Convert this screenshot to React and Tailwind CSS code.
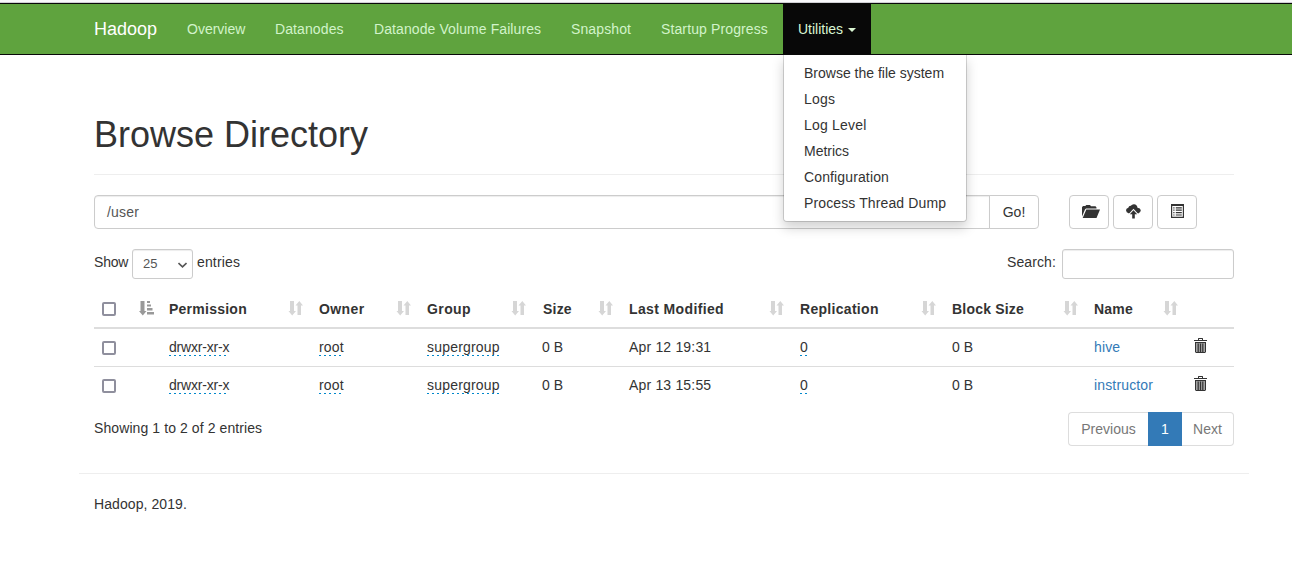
import React from "react";

const NAV = [
  { label: "Overview", cls: "w-[88px]" },
  { label: "Datanodes", cls: "w-[99px] tracking-[0.1px]" },
  { label: "Datanode Volume Failures", cls: "w-[197px] tracking-[0.09px]" },
  { label: "Snapshot", cls: "w-[90px] tracking-[0.12px]" },
  { label: "Startup Progress", cls: "w-[137px] tracking-[0.12px]" },
];

const MENU = [
  { label: "Browse the file system", cls: "" },
  { label: "Logs", cls: "tracking-[0.2px]" },
  { label: "Log Level", cls: "tracking-[0.2px]" },
  { label: "Metrics", cls: "" },
  { label: "Configuration", cls: "tracking-[0.13px]" },
  { label: "Process Thread Dump", cls: "tracking-[0.12px]" },
];

const HEADERS = [
  { label: "Permission", cls: "tracking-[0.25px]" },
  { label: "Owner", cls: "tracking-[0.4px]" },
  { label: "Group", cls: "tracking-[0.4px]" },
  { label: "Size", cls: "pl-px tracking-[0.2px]" },
  { label: "Last Modified", cls: "tracking-[0.37px]" },
  { label: "Replication", cls: "tracking-[0.3px]" },
  { label: "Block Size", cls: "tracking-[0.2px]" },
  { label: "Name", cls: "tracking-[0.2px]" },
];

const ROWS = [
  { modified: "Apr 12 19:31", name: "hive" },
  { modified: "Apr 13 15:55", name: "instructor" },
];

const GRID = "grid grid-cols-[67px_150px_108px_115px_87px_171px_152px_142px_100px_48px]";

function SortIcon() {
  return (
    <svg width="15" height="15" viewBox="0 0 15 15" fill="#d6d6d6" className="shrink-0">
      <path d="M2 0h4v10h2L4.200 14.500.5 10H2zM9.500 14V4.500H7.500L11.300 0 15 4.500h-2V14z" />
    </svg>
  );
}

function SortAscIcon() {
  return (
    <svg width="15" height="15" viewBox="0 0 15 15" fill="#999999" className="shrink-0">
      <path d="M1.500 0h4v10h2L3.800 14.500 0 10h1.500zM8 0h3v2H8zM8 3.500h4v2H8zM8 7h5.500v2.500H8zM8 11h7v2.500H8z" />
    </svg>
  );
}

function FolderOpenIcon() {
  return (
    <svg width="18" height="13" viewBox="0 0 18 13" fill="#333" className="ml-[3px] -mt-0.5">
      <path d="M0 11.500V2.200L1 1h2.300L4.300 0H8l1 1.200h4.500l1 1.300v1H4L3 4.500z" />
      <path d="M4.300 4.500H18L14.500 13H.7z" />
    </svg>
  );
}

function CloudUploadIcon() {
  return (
    <svg width="15" height="15" viewBox="0 0 15 15" fill="#333" className="-mt-px">
      <path d="M3 9.500Q0 8.500 0 6.300 0 4.200 2.300 3.700 2.700 1.800 4.800 1.800 6 .2 8 .3 11 .6 11.500 3.700 14.500 4 14.800 6.300 14.800 8.200 12.300 9.500z" />
      <path stroke="#fff" strokeWidth="1.800" paintOrder="stroke" d="M7.500 6.200 11.200 10.200H8.800V14.500H6.200v-4.300H3.800z" />
    </svg>
  );
}

function ListAltIcon() {
  return (
    <svg width="13" height="14" viewBox="0 0 13 14" fill="#333" className="-mt-0.5">
      <path fillRule="evenodd" d="M0 0h13v14H0zM1.200 2v10.800h10.600V2z" />
      <path d="M2.300 3.200h1.200v1.200H2.300zM4.800 3.200h6v1.200h-6zM2.300 5.600h1.200v1.200H2.300zM4.800 5.600h6v1.200h-6zM2.300 8h1.200v1.200H2.300zM4.800 8h6v1.200h-6zM2.300 10.400h1.200v1.200H2.300zM4.800 10.400h6v1.200h-6z" />
    </svg>
  );
}

function TrashIcon() {
  return (
    <svg width="13" height="16" viewBox="0 0 13 16" fill="#333" className="mt-px">
      <path fillRule="evenodd" d="M4 2V.5L4.500 0h4L9 .5V2h4v1H0V2zM5 1v1h3V1z" />
      <path d="M1 4h11v1.500H1zM1 5h1v9.500H1zM11 5h1v9.500h-1zM2 14h9v1H2z" />
      <path fill="#a3a3a3" d="M2 5.500h9V14H2z" />
      <path d="M3.600 5.500h1.200V14H3.600zM5.900 5.500h1.200V14H5.900zM8.200 5.500h1.200V14H8.200z" />
    </svg>
  );
}

function Checkbox() {
  return <span className="ml-2 block size-3.5 rounded-[2px] border-2 border-[#8f8f9d] bg-white" />;
}

function Editable({ children, cls = "" }) {
  return (
    <span className="block h-[19px] w-fit bg-[repeating-linear-gradient(to_right,#0088cc_0_2px,transparent_2px_5px)] bg-[length:100%_1px] bg-bottom bg-no-repeat leading-5">
      <span className={cls}>{children}</span>
    </span>
  );
}

function IconButton({ children, label }) {
  return (
    <button aria-label={label} className="flex h-[34px] w-10 items-center justify-center rounded-[4px] border border-[#cccccc] bg-white">
      {children}
    </button>
  );
}

export default function App() {
  return (
    <div className="h-[576px] w-[1292px] overflow-hidden bg-white font-['Liberation_Sans',Arial,sans-serif] text-sm leading-5 text-[#333]">
      <div className="h-[3px] border-b border-[#cfcfd3] bg-[#f9f9fb]" />
      <nav className="flex h-[52px] border-y border-[#080808] bg-[#5fa33e] pl-[94px] text-[#d2f3ca]">
        <div className="w-[78px] pt-[15px] text-lg leading-5 text-white">Hadoop</div>
        {NAV.map((n) => (
          <a key={n.label} className={`${n.cls} whitespace-nowrap pl-[15px] pt-[15px]`}>{n.label}</a>
        ))}
        <div className="relative h-[50px] w-[88px] bg-[#080808]">
          <a className="flex items-center pl-[15px] pt-[15px] text-[#d9f5d2]">
            <span className="w-[44px]">Utilities</span>
            <span className="ml-1.5 mt-0.5 border-x-4 border-t-4 border-x-transparent border-t-[#d9f5d2]" />
          </a>
          <ul className="absolute left-0 top-[51px] z-10 h-[167px] w-[184px] rounded-b-[4px] border border-t-0 border-black/15 bg-white bg-clip-padding pt-[5px] text-[#333] shadow-[0_6px_12px_rgba(0,0,0,0.175)]">
            {MENU.map((m) => (
              <li key={m.label} className={`${m.cls} whitespace-nowrap px-5 py-[3px]`}>{m.label}</li>
            ))}
          </ul>
        </div>
      </nav>

      <main className="ml-[94px] w-[1140px]">
        <h1 className="h-[120px] border-b border-[#eeeeee] pt-[60px] text-4xl leading-[40px]">Browse Directory</h1>

        <div className="mt-5 flex h-[34px]">
          <div className="flex h-[34px] w-[896px] items-center rounded-l-[4px] border border-[#cccccc] pl-3 tracking-[0.2px] text-[#555] shadow-[inset_0_1px_1px_rgba(0,0,0,0.075)]">/user</div>
          <button className="-ml-px h-[34px] w-[50px] rounded-r-[4px] border border-[#cccccc]">Go!</button>
          <div className="ml-[30px] flex gap-1">
            <IconButton label="Create directory"><FolderOpenIcon /></IconButton>
            <IconButton label="Upload files"><CloudUploadIcon /></IconButton>
            <IconButton label="Cut and paste"><ListAltIcon /></IconButton>
          </div>
        </div>

        <div className="mt-5 flex h-[30px]">
          <span className="w-[38px] pt-[3px] tracking-[-0.2px]">Show</span>
          <div className="flex h-[30px] w-[61px] items-center justify-between rounded-[3px] border border-[#cccccc] pl-[10px] pr-[5px] text-[13px] text-[#555] shadow-[inset_0_1px_1px_rgba(0,0,0,0.075)]">
            25
            <svg width="9" height="6" viewBox="0 0 9 6" fill="none" stroke="#555" strokeWidth="1.600" className="mt-px"><path d="M.5 1 4.500 4.800 8.500 1" /></svg>
          </div>
          <span className="ml-1 pt-[3px] tracking-[0.15px]">entries</span>
          <span className="ml-auto pt-[3px] tracking-[0.1px]">Search:</span>
          <div className="ml-[6px] h-[30px] w-[172px] rounded-[3px] border border-[#cccccc] shadow-[inset_0_1px_1px_rgba(0,0,0,0.075)]" />
        </div>

        <div className="mt-2.5">
          <div className={`${GRID} h-10 border-b-2 border-[#dddddd] font-bold`}>
            <div className="flex items-start justify-between pr-[7px] pt-[12px]">
              <span className="pt-[1px]"><Checkbox /></span>
              <SortAscIcon />
            </div>
            {HEADERS.map((h) => (
              <div key={h.label} className="flex justify-between whitespace-nowrap pl-2 pr-2">
                <span className={`${h.cls} pt-[10px]`}>{h.label}</span>
                <span className="pt-[12px]"><SortIcon /></span>
              </div>
            ))}
            <div />
          </div>
          {ROWS.map((r, i) => (
            <div key={r.name} className={`${GRID} h-[38px] pt-2 ${i === 0 ? "border-b border-[#dddddd]" : ""}`}>
              <div className="pt-1"><Checkbox /></div>
              <div className="pl-2"><Editable cls="tracking-[-0.2px]">drwxr-xr-x</Editable></div>
              <div className="pl-2"><Editable cls="tracking-[0.2px]">root</Editable></div>
              <div className="pl-2"><Editable cls="tracking-[0.2px]">supergroup</Editable></div>
              <div className="pl-2">0 B</div>
              <div className="pl-2 tracking-[0.18px]">{r.modified}</div>
              <div className="pl-2"><Editable>0</Editable></div>
              <div className="pl-2">0 B</div>
              <div className="pl-2 tracking-[0.15px] text-[#337ab7]">{r.name}</div>
              <div className="pl-2"><TrashIcon /></div>
            </div>
          ))}
        </div>

        <div className="mt-[7px] flex h-[34px] justify-between">
          <span className="pt-[6px] tracking-[0.09px]">Showing 1 to 2 of 2 entries</span>
          <div className="flex text-center leading-8 text-[#777]">
            <span className="w-[80px] rounded-l-[4px] border border-r-0 border-[#dddddd]">Previous</span>
            <span className="w-[34px] border border-[#337ab7] bg-[#337ab7] text-white">1</span>
            <span className="w-[52px] rounded-r-[4px] border border-l-0 border-[#dddddd]">Next</span>
          </div>
        </div>
      </main>

      <footer className="ml-[79px] mt-[27px] w-[1170px] border-t border-[#eeeeee] pl-[15px] pt-5 tracking-[0.08px]">Hadoop, 2019.</footer>
    </div>
  );
}
